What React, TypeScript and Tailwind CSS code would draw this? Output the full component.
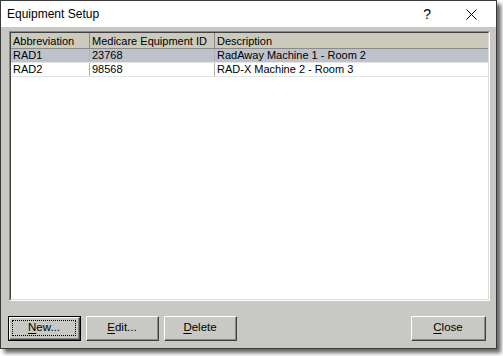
import React, { useState } from 'react';

type Row = { abbr: string; id: string; desc: string };

const rows: Row[] = [
    { abbr: 'RAD1', id: '23768', desc: 'RadAway Machine 1 - Room 2' },
    { abbr: 'RAD2', id: '98568', desc: 'RAD-X Machine 2 - Room 3' },
];

// classic raised button, optionally the default one (black frame + focus dots)
const DlgButton: React.FC<{ label: string; hot: number; isDefault?: boolean; className?: string }> = ({
    label,
    hot,
    isDefault,
    className = '',
}) => (
    <button
        className={`h-[25px] w-[73px] bg-[#c8c8c4] text-[11.5px] text-black ${
            isDefault ? 'border border-black' : ''
        } ${className}`}
    >
        <div className="flex h-full w-full border-t border-l border-white border-r border-b border-r-[#404040] border-b-[#404040]">
            <div className="flex flex-1 items-center justify-center border-r border-b border-r-[#8a8a8a] border-b-[#8a8a8a]">
                <div className={`flex flex-1 self-stretch items-center justify-center m-[2px] ${isDefault ? 'border border-dotted border-black' : ''}`}>
                    <span>
                        {label.slice(0, hot)}
                        <span className="underline underline-offset-2">{label[hot]}</span>
                        {label.slice(hot + 1)}
                    </span>
                </div>
            </div>
        </div>
    </button>
);

export default function App() {
    const [selected, setSelected] = useState(0);

    return (
        <div className="h-[356px] w-[503px] bg-white" style={{ fontFamily: '"Liberation Sans", Tahoma, sans-serif' }}>
            <div className="flex h-[349px] w-[497px] flex-col border border-[#3a3a3a] bg-[#c8c8c4] shadow-[4px_4px_4px_rgba(0,0,0,0.6)]">
                {/* Title bar */}
                <div className="flex h-[26px] items-center bg-white pl-[6px]">
                    <span className="text-[12px] text-black">Equipment Setup</span>
                    <span className="ml-auto mr-[35px] text-[14px] text-black">?</span>
                    <svg width="11" height="11" viewBox="0 0 11 11" className="mr-[19px]">
                        <path d="M0.5 0.5 L10.5 10.5 M10.5 0.5 L0.5 10.5" stroke="#000" strokeWidth="1" />
                    </svg>
                </div>

                {/* Body */}
                <div className="flex flex-1 flex-col pl-[8px] pr-[6px] pt-[4px] pb-[7px]">
                    <div className="flex h-[270px] flex-col border border-t-[#8a8a8a] border-l-[#8a8a8a] border-r-white border-b-white">
                        <div className="flex flex-1 flex-col border border-t-[#404040] border-l-[#404040] border-r-[#dcdcdc] border-b-[#dcdcdc] bg-white">
                            {/* Header */}
                            <div className="flex h-[16px] items-center border-b border-[#8a8a8a] bg-[#cbcabc] text-[11px] text-black">
                                <div className="w-[79px] border-r border-[#8a8a8a] pl-[2px] leading-[16px]">Abbreviation</div>
                                <div className="w-[125px] border-r border-[#8a8a8a] pl-[2px] leading-[16px]">Medicare Equipment ID</div>
                                <div className="flex-1 pl-[2px] leading-[16px]">Description</div>
                            </div>
                            {rows.map((r, i) => (
                                <div
                                    key={r.abbr}
                                    onClick={() => setSelected(i)}
                                    className={`flex h-[14px] items-center border-b border-[#e4e4e4] text-[11px] text-black ${
                                        i === selected ? 'bg-[#bec3cb]' : 'bg-white'
                                    }`}
                                >
                                    <div className="w-[79px] border-r border-[#b4b4b4] pl-[2px] leading-[13px]">{r.abbr}</div>
                                    <div className="w-[125px] border-r border-[#b4b4b4] pl-[2px] leading-[13px]">{r.id}</div>
                                    <div className="flex-1 pl-[2px] leading-[13px]">{r.desc}</div>
                                </div>
                            ))}
                        </div>
                    </div>

                    {/* Buttons */}
                    <div className="-ml-[1px] mt-auto flex items-end">
                        <DlgButton label="New..." hot={0} isDefault />
                        <DlgButton label="Edit..." hot={0} className="ml-[5px]" />
                        <DlgButton label="Delete" hot={0} className="ml-[5px]" />
                        <DlgButton label="Close" hot={0} className="ml-auto mr-[4px] w-[75px]" />
                    </div>
                </div>
            </div>
        </div>
    );
}
